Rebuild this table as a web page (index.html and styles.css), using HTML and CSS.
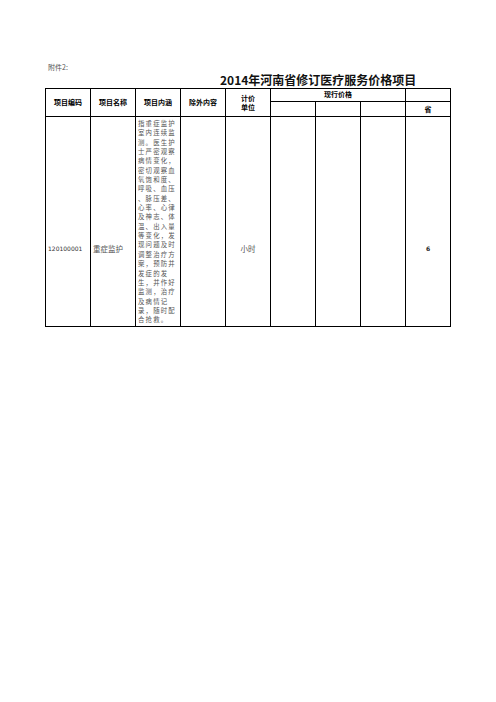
FILE: index.html
```html
<!DOCTYPE html>
<html lang="zh">
<head>
<meta charset="utf-8">
<title>2014年河南省修订医疗服务价格项目</title>
<link rel="stylesheet" href="styles.css">
</head>
<body>
<div class="page">
  <div class="attach">附件2:</div>
  <div class="title">2014年河南省修订医疗服务价格项目</div>
  <table class="sheet">
    <colgroup>
      <col class="c"><col class="c"><col class="c"><col class="c"><col class="c"><col class="c"><col class="c"><col class="c"><col class="c">
    </colgroup>
    <tr class="h1">
      <th rowspan="2">项目编码</th>
      <th rowspan="2">项目名称</th>
      <th rowspan="2">项目内涵</th>
      <th rowspan="2">除外内容</th>
      <th rowspan="2" class="two">计价<br>单位</th>
      <th colspan="3" class="top">现行价格</th>
      <th></th>
    </tr>
    <tr class="h2">
      <th></th><th></th><th></th>
      <th class="bot">省</th>
    </tr>
    <tr class="body">
      <td class="code">120100001</td>
      <td class="name">重症监护</td>
      <td class="desc">指重症监护<br>室内连续监<br>测。医生护<br>士严密观察<br>病情变化，<br>密切观察血<br>氧饱和度、<br>呼吸、血压<br>、脉压差、<br>心率、心律<br>及神志、体<br>温、出入量<br>等变化，发<br>现问题及时<br>调整治疗方<br>案，预防并<br>发症的发<br>生，并作好<br>监测，治疗<br>及病情记<br>录，随时配<br>合抢救。</td>
      <td></td>
      <td class="unit">小时</td>
      <td></td><td></td><td></td>
      <td class="price">6</td>
    </tr>
  </table>
</div>
</body>
</html>
```
FILE: styles.css
```css
html, body {
  margin: 0;
  padding: 0;
  background: #fff;
}
body {
  font-family: "Noto Sans CJK SC", "DejaVu Sans", sans-serif;
  color: #000;
}
.page {
  padding: 63px 0 0 45px;
  width: 451px;
}
.attach {
  font-size: 7px;
  line-height: 9px;
  height: 9px;
  padding-left: 3px;
  color: #555;
}
.title {
  font-size: 12px;
  font-weight: bold;
  line-height: 15px;
  height: 16px;
  padding-left: 175px;
  white-space: nowrap;
  color: #111;
}
.sheet {
  border-collapse: collapse;
  table-layout: fixed;
  width: 406px;
}
.sheet col.c {
  width: 45px;
}
.sheet th, .sheet td {
  border: 1px solid #000;
  padding: 0;
  text-align: center;
  vertical-align: middle;
  overflow: hidden;
}
.sheet th {
  font-size: 7px;
  font-weight: bold;
  line-height: 9px;
}
.h1 th {
  height: 11px;
}
.h2 th {
  height: 14px;
}
.sheet th.top {
  line-height: 8px;
  vertical-align: top;
  padding-top: 1px;
}
.sheet th.two {
  line-height: 9px;
  padding-top: 1px;
}
.body td {
  font-size: 7px;
  line-height: 9px;
  color: #555;
  vertical-align: top;
  padding-top: 127px;
}
.body td.code {
  text-align: left;
  padding-left: 2px;
  font-family: "DejaVu Sans", sans-serif;
  font-size: 6px;
  color: #333;
}
.body td.name {
  text-align: left;
  padding-left: 2px;
  font-size: 7.5px;
}
.body td.desc {
  text-align: left;
  padding: 2px 0 1px 2px;
  font-size: 6.4px;
  letter-spacing: 1.2px;
  line-height: 9.35px;
  white-space: nowrap;
  color: #555;
}
.body td.unit {
  font-size: 7.5px;
}
.body td.price {
  font-family: "DejaVu Sans", sans-serif;
  font-size: 6px;
  font-weight: bold;
  color: #222;
}
```
